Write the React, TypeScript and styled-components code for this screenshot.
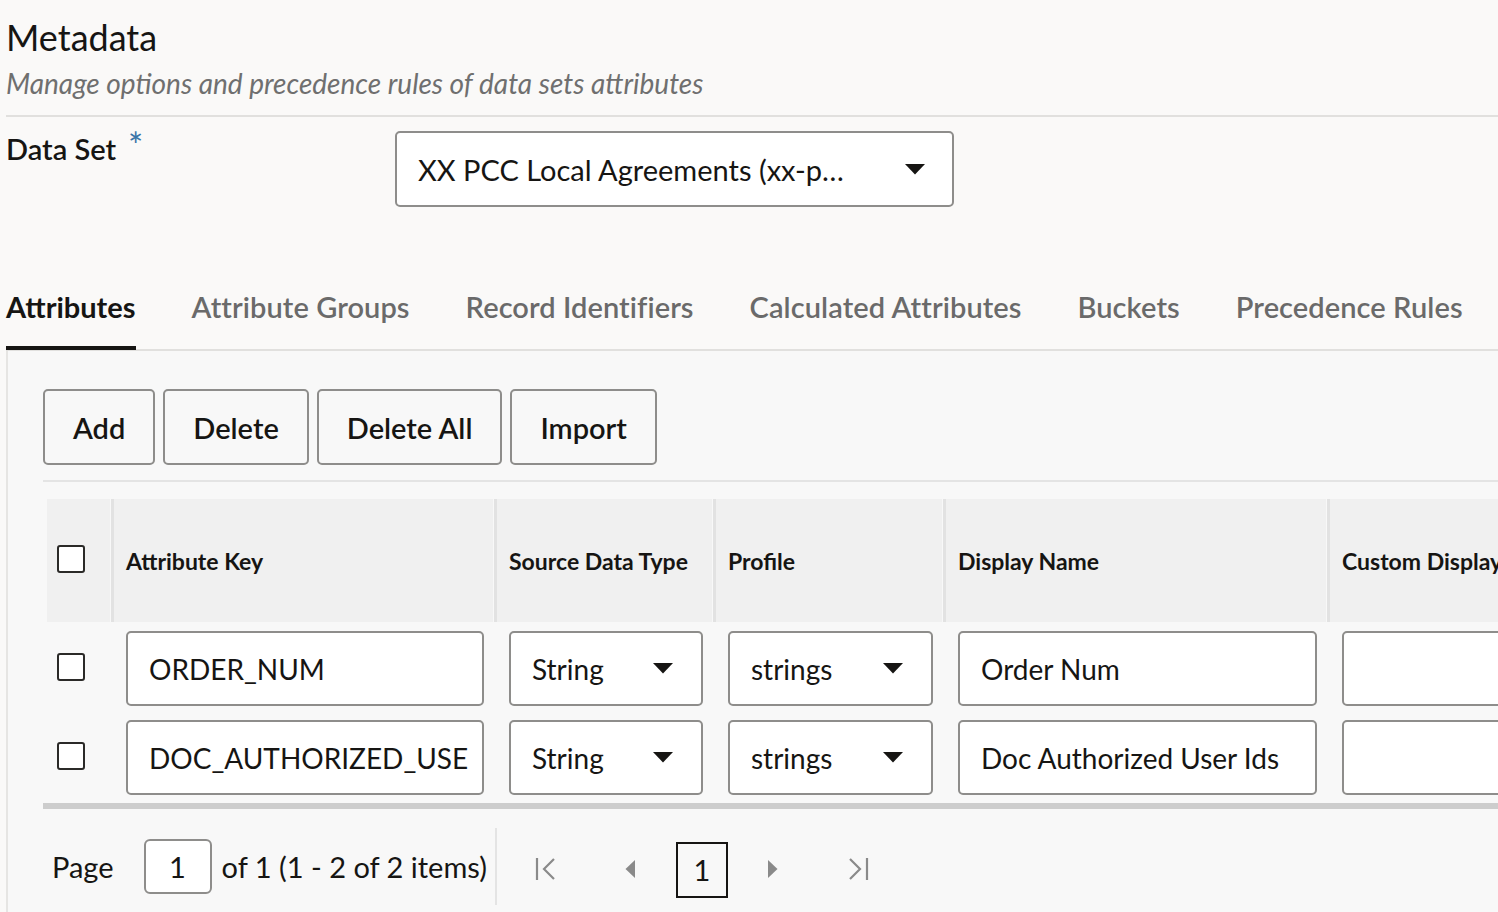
import { createGlobalStyle } from "styled-components";
import styled from "styled-components";

const GlobalStyle = createGlobalStyle`
    html, body {
        margin: 0;
        padding: 0;
        background: #faf9f8;
        overflow: hidden;
    }
    body {
        font-family: Lato, "Noto Sans", sans-serif;
        color: #161513;
    }
`;

type Column = {
    key: string;
    title: string;
};

const columns: Column[] = [
    {key: 'attributeKey', title: 'Attribute Key'},
    {key: 'sourceType', title: 'Source Data Type'},
    {key: 'profile', title: 'Profile'},
    {key: 'displayName', title: 'Display Name'},
    {key: 'customDisplay', title: 'Custom Display Name'},
];

type Row = {
    attributeKey: string;
    sourceType: string;
    profile: string;
    displayName: string;
    customDisplay: string;
};

const rows: Row[] = [
    {attributeKey: 'ORDER_NUM', sourceType: 'String', profile: 'strings', displayName: 'Order Num', customDisplay: ''},
    {attributeKey: 'DOC_AUTHORIZED_USE', sourceType: 'String', profile: 'strings', displayName: 'Doc Authorized User Ids', customDisplay: ''},
];

const tabs = ['Attributes', 'Attribute Groups', 'Record Identifiers', 'Calculated Attributes', 'Buckets', 'Precedence Rules'];

const Caret = () => (
    <svg width="20" height="11" viewBox="0 0 20 11">
        <path d="M0 0 L20 0 L10 10.5 Z" fill="#161513"/>
    </svg>
);

const Select = ({value}: {value: string}) => (
    <FieldBox>
        <span className='value'>{value}</span>
        <Caret/>
    </FieldBox>
);

export default function App() {
    return (
        <Page>
            <GlobalStyle/>
            <Title>Metadata</Title>
            <Subtitle>Manage options and precedence rules of data sets attributes</Subtitle>
            <Divider/>

            <FormRow>
                <Label>
                    Data Set<Required>*</Required>
                </Label>
                <DataSetSelect>
                    <span>XX PCC Local Agreements (xx-p…</span>
                    <Caret/>
                </DataSetSelect>
            </FormRow>

            <TabBar>
                {tabs.map((tab, i) => (
                    <Tab key={tab} $active={i === 0}>{tab}</Tab>
                ))}
            </TabBar>

            <Panel>
                <Toolbar>
                    <Button>Add</Button>
                    <Button>Delete</Button>
                    <Button>Delete All</Button>
                    <Button>Import</Button>
                </Toolbar>
                <ToolbarDivider/>

                <Table>
                    <HeaderRow>
                        <HeaderCell $first>
                            <Checkbox/>
                        </HeaderCell>
                        {columns.map(c => (
                            <HeaderCell key={c.key}>{c.title}</HeaderCell>
                        ))}
                    </HeaderRow>
                    {rows.map(row => (
                        <BodyRow key={row.attributeKey}>
                            <BodyCell $first>
                                <Checkbox/>
                            </BodyCell>
                            <BodyCell>
                                <FieldBox>{row.attributeKey}</FieldBox>
                            </BodyCell>
                            <BodyCell>
                                <Select value={row.sourceType}/>
                            </BodyCell>
                            <BodyCell>
                                <Select value={row.profile}/>
                            </BodyCell>
                            <BodyCell>
                                <FieldBox>{row.displayName}</FieldBox>
                            </BodyCell>
                            <BodyCell>
                                <FieldBox>{row.customDisplay}</FieldBox>
                            </BodyCell>
                        </BodyRow>
                    ))}
                </Table>
                <TableBottom/>

                <Pager>
                    <PagerInfo>
                        <PageLabel>Page</PageLabel>
                        <PageInput>1</PageInput>
                        <span>of 1 (1 - 2 of 2 items)</span>
                    </PagerInfo>
                    <PagerNav>
                        <NavItem $gap={38}>
                            <svg width="22" height="26" viewBox="0 0 22 26">
                                <path d="M2 2 V24" stroke="#8a8a8a" strokeWidth="2.2" fill="none"/>
                                <path d="M19 3 L9 13 L19 23" stroke="#8a8a8a" strokeWidth="2.2" fill="none"/>
                            </svg>
                        </NavItem>
                        <NavItem $gap={68}>
                            <svg width="10" height="20" viewBox="0 0 10 20">
                                <path d="M10 1 L0.5 10 L10 19 Z" fill="#8a8a8a"/>
                            </svg>
                        </NavItem>
                        <CurrentPage>1</CurrentPage>
                        <NavItem $gap={40}>
                            <svg width="10" height="20" viewBox="0 0 10 20">
                                <path d="M0 1 L9.5 10 L0 19 Z" fill="#8a8a8a"/>
                            </svg>
                        </NavItem>
                        <NavItem $gap={69}>
                            <svg width="22" height="26" viewBox="0 0 22 26">
                                <path d="M3 3 L13 13 L3 23" stroke="#8a8a8a" strokeWidth="2.2" fill="none"/>
                                <path d="M20 2 V24" stroke="#8a8a8a" strokeWidth="2.2" fill="none"/>
                            </svg>
                        </NavItem>
                    </PagerNav>
                </Pager>
            </Panel>
        </Page>
    );
}

const Page = styled.div`
    padding: 14px 0 0 6px;
    width: 1700px;
    min-height: 912px;
    box-sizing: border-box;
`;

const Title = styled.h1`
    margin: 0;
    font-size: 36px;
    font-weight: 400;
    line-height: 46px;
    color: #161513;
`;

const Subtitle = styled.p`
    margin: 6px 0 0;
    font-size: 28px;
    font-style: italic;
    line-height: 34px;
    color: #6f6f6f;
`;

const Divider = styled.div`
    height: 2px;
    background: #e1e0de;
    margin-top: 15px;
`;

const FormRow = styled.div`
    display: grid;
    grid-template-columns: 389px 559px;
    margin-top: 14px;
    height: 76px;
`;

const Label = styled.div`
    font-size: 29px;
    font-weight: 600;
    line-height: 32px;
    padding-top: 2px;
    white-space: nowrap;
`;

const Required = styled.span`
    display: inline-block;
    color: #3a76a8;
    font-size: 36px;
    font-weight: 400;
    margin-left: 12px;
    vertical-align: top;
    line-height: 30px;
    margin-top: -3px;
`;

const DataSetSelect = styled.div`
    box-sizing: border-box;
    height: 76px;
    border: 2px solid #8e8d8b;
    border-radius: 5px;
    background: #fff;
    display: flex;
    align-items: center;
    justify-content: space-between;
    padding: 0 27px 0 21px;
    font-size: 29px;

    span {
        white-space: nowrap;
    }
`;

const TabBar = styled.div`
    display: flex;
    gap: 56px;
    margin-top: 82px;
    border-bottom: 2px solid #e1e0de;
`;

const Tab = styled.div<{$active?: boolean}>`
    font-size: 29px;
    font-weight: ${p => p.$active ? 700 : 600};
    letter-spacing: ${p => p.$active ? '0' : '0.08px'};
    color: ${p => p.$active ? '#161513' : '#6a6a6a'};
    line-height: 36px;
    padding-bottom: 21px;
    border-bottom: 4px solid ${p => p.$active ? '#161513' : 'transparent'};
    margin-bottom: -1px;
    white-space: nowrap;
`;

const Panel = styled.div`
    border-left: 2px solid #e6e5e3;
    background: #f8f8f8;
    padding: 38px 0 20px 35px;
    min-height: 560px;
`;

const Toolbar = styled.div`
    display: flex;
    gap: 8px;
`;

const Button = styled.button`
    box-sizing: border-box;
    height: 76px;
    padding: 0 28px;
    border: 2px solid #8e8d8b;
    border-radius: 5px;
    background: #f8f8f8;
    font-family: inherit;
    font-size: 29px;
    font-weight: 600;
    color: #161513;
`;

const ToolbarDivider = styled.div`
    height: 2px;
    background: #e4e4e4;
    margin-top: 15px;
`;

const Table = styled.div`
    margin-top: 17px;
    padding-left: 4px;
`;

const gridColumns = '63px 379px 215px 226px 380px 300px';

const HeaderRow = styled.div`
    display: grid;
    grid-template-columns: ${gridColumns};
    column-gap: 4px;
    height: 123px;
`;

const HeaderCell = styled.div<{$first?: boolean}>`
    background: #f0f0f0;
    display: flex;
    align-items: center;
    padding-left: ${p => p.$first ? '10px' : '12px'};
    box-shadow: ${p => p.$first ? 'none' : '-3px 0 0 #e2e2e2'};
    font-size: 23px;
    font-weight: 700;
    white-space: nowrap;
    overflow: hidden;
`;

const BodyRow = styled.div`
    display: grid;
    grid-template-columns: ${gridColumns};
    column-gap: 4px;
    padding: 9px 0 5px;
`;

const BodyCell = styled.div<{$first?: boolean}>`
    display: flex;
    align-items: center;
    padding: ${p => p.$first ? '0 0 0 10px' : '0 9px 0 12px'};
`;

const FieldBox = styled.div`
    box-sizing: border-box;
    flex: 1;
    height: 75px;
    border: 2px solid #8e8d8b;
    border-radius: 5px;
    background: #fff;
    display: flex;
    align-items: center;
    justify-content: space-between;
    padding: 0 28px 0 21px;
    font-size: 28px;
    white-space: nowrap;
    overflow: hidden;

    .value {
        overflow: hidden;
    }
`;

const Checkbox = styled.div`
    box-sizing: border-box;
    width: 28px;
    height: 28px;
    border: 2px solid #2b2a28;
    border-radius: 3px;
    background: #fff;
    margin-top: -4px;
`;

const TableBottom = styled.div`
    height: 6px;
    background: #cdcdcd;
    margin-top: 3px;
`;

const Pager = styled.div`
    display: flex;
    align-items: center;
    margin-top: 19px;
    padding-left: 9px;
    font-size: 29px;
`;

const PagerInfo = styled.div`
    display: flex;
    align-items: center;
    gap: 10px;
    padding-right: 8px;
    border-right: 2px solid #e4e4e4;
    height: 77px;
    white-space: nowrap;
`;

const PageLabel = styled.span`
    margin-right: 20px;
`;

const PageInput = styled.div`
    box-sizing: border-box;
    width: 68px;
    height: 55px;
    border: 2px solid #8e8d8b;
    border-radius: 6px;
    background: #fff;
    display: flex;
    align-items: center;
    justify-content: center;
`;

const PagerNav = styled.div`
    display: flex;
    align-items: center;
`;

const NavItem = styled.div<{$gap: number}>`
    display: flex;
    align-items: center;
    margin-left: ${p => p.$gap}px;
    padding-top: 4px;
`;

const CurrentPage = styled.div`
    box-sizing: border-box;
    width: 52px;
    height: 56px;
    border: 2px solid #161513;
    display: flex;
    align-items: center;
    justify-content: center;
    margin: 6px 0 0 41px;
`;
